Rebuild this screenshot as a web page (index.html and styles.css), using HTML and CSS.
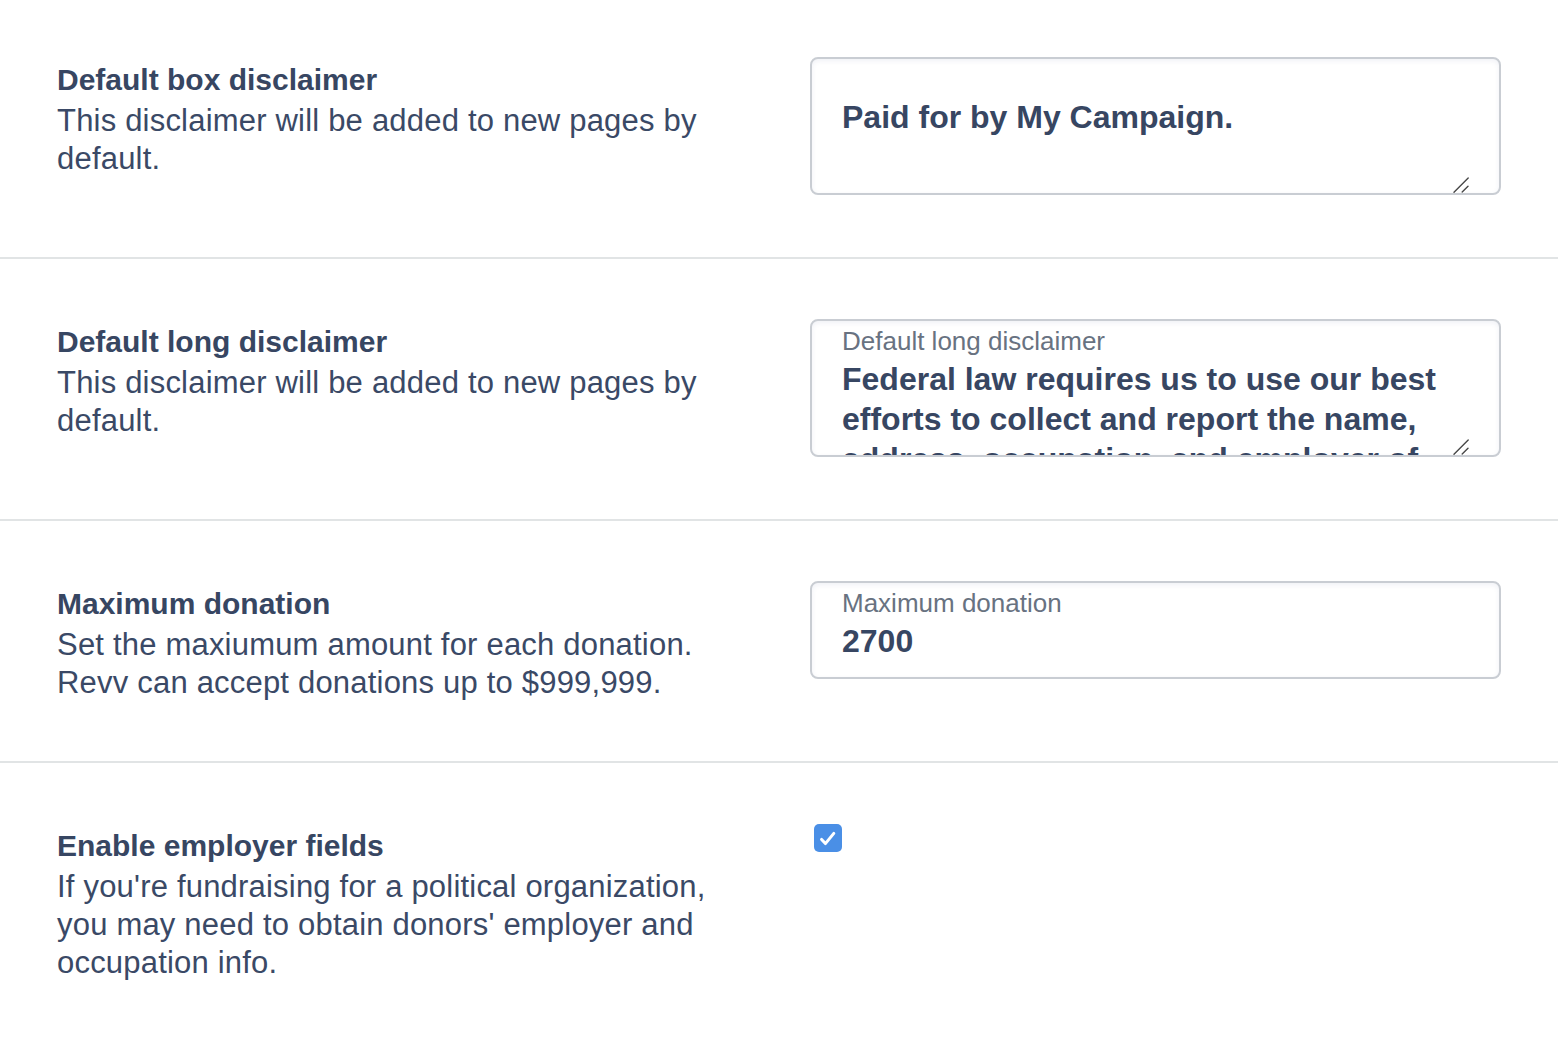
FILE: index.html
```html
<!DOCTYPE html>
<html lang="en">
<head>
<meta charset="utf-8">
<title>Settings</title>
<link rel="stylesheet" href="styles.css">
</head>
<body>
<main class="settings">
  <section class="row row-first">
    <div class="info">
      <h3 class="title">Default box disclaimer</h3>
      <p class="desc">This disclaimer will be added to new pages by default.</p>
    </div>
    <div class="control">
      <div class="field field-area">
        <textarea class="area" spellcheck="false">Paid for by My Campaign.</textarea>
        <svg class="grip" viewBox="0 0 16 16" width="16" height="16" aria-hidden="true"><path d="M1 15.2 L15.2 1 M9.2 15 L15 9.2" stroke="#4a4a4a" stroke-width="1.4" stroke-linecap="round" fill="none"/></svg>
      </div>
    </div>
  </section>

  <section class="row">
    <div class="info">
      <h3 class="title">Default long disclaimer</h3>
      <p class="desc">This disclaimer will be added to new pages by default.</p>
    </div>
    <div class="control">
      <div class="field field-area">
        <label class="float-label">Default long disclaimer</label>
        <textarea class="area" spellcheck="false">Federal law requires us to use our best efforts to collect and report the name, address, occupation, and employer of individuals whose contributions exceed $200 in an election cycle.</textarea>
        <svg class="grip" viewBox="0 0 16 16" width="16" height="16" aria-hidden="true"><path d="M1 15.2 L15.2 1 M9.2 15 L15 9.2" stroke="#4a4a4a" stroke-width="1.4" stroke-linecap="round" fill="none"/></svg>
      </div>
    </div>
  </section>

  <section class="row">
    <div class="info">
      <h3 class="title">Maximum donation</h3>
      <p class="desc">Set the maxiumum amount for each donation. Revv can accept donations up to $999,999.</p>
    </div>
    <div class="control">
      <div class="field field-input">
        <label class="float-label">Maximum donation</label>
        <input class="text-input" type="text" value="2700">
      </div>
    </div>
  </section>

  <section class="row row-last">
    <div class="info">
      <h3 class="title">Enable employer fields</h3>
      <p class="desc">If you're fundraising for a political organization, you may need to obtain donors' employer and occupation info.</p>
    </div>
    <div class="control">
      <span class="checkbox" role="checkbox" aria-checked="true">
        <svg viewBox="0 0 28 28" width="28" height="28"><path d="M7.6 15.4 L11.4 19.6 L19.8 9.4" fill="none" stroke="#ffffff" stroke-width="3" stroke-linecap="round" stroke-linejoin="round"/></svg>
      </span>
    </div>
  </section>
</main>
</body>
</html>
```

FILE: styles.css
```css
html, body {
  margin: 0;
  padding: 0;
  background: #ffffff;
}

body {
  font-family: "Liberation Sans", Arial, Helvetica, sans-serif;
  color: #374662;
}

.settings {
  display: flex;
  flex-direction: column;
}

.row {
  display: grid;
  grid-template-columns: 680px 691px;
  column-gap: 73px;
  align-items: start;
  padding: 60px 57px 59px;
  border-bottom: 2px solid #e1e4e5;
}

.row-first {
  padding-top: 57px;
}

.row-last {
  border-bottom: none;
}

.info {
  padding-top: 4px;
}

.title {
  margin: 0 0 3px;
  font-size: 30px;
  line-height: 38px;
  font-weight: 700;
  color: #374662;
}

.desc {
  margin: 0;
  font-size: 31px;
  line-height: 38px;
  letter-spacing: 0.2px;
  font-weight: 400;
  color: #3a4966;
}

.control {
  padding-bottom: 3px;
}

.field {
  position: relative;
  border: 2px solid #c9cdd3;
  border-radius: 8px;
  padding: 0 30px;
  background: #ffffff;
  box-shadow: inset 0 2px 5px rgba(60, 80, 140, 0.08);
  overflow: hidden;
}

.float-label {
  position: absolute;
  left: 30px;
  top: 5px;
  font-size: 26px;
  line-height: 30px;
  color: #687281;
  white-space: nowrap;
}

.area {
  display: block;
  box-sizing: border-box;
  width: 100%;
  height: 134px;
  margin: 0;
  padding: 38px 0 0;
  border: none;
  outline: none;
  background: transparent;
  font-family: inherit;
  font-size: 32px;
  line-height: 40px;
  font-weight: 700;
  color: #374662;
  resize: none;
  overflow: hidden;
}

.grip {
  position: absolute;
  right: 30px;
  bottom: 0;
  pointer-events: none;
}

.text-input {
  display: block;
  box-sizing: border-box;
  width: 100%;
  height: 94px;
  margin: 0;
  padding: 38px 0 16px;
  border: none;
  outline: none;
  background: transparent;
  font-family: inherit;
  font-size: 32px;
  line-height: 40px;
  font-weight: 700;
  color: #374662;
}

.checkbox {
  display: block;
  width: 28px;
  height: 28px;
  margin: 1px 0 0 4px;
  border-radius: 5px;
  background: #4a8fe6;
}

.checkbox svg {
  display: block;
}
```
